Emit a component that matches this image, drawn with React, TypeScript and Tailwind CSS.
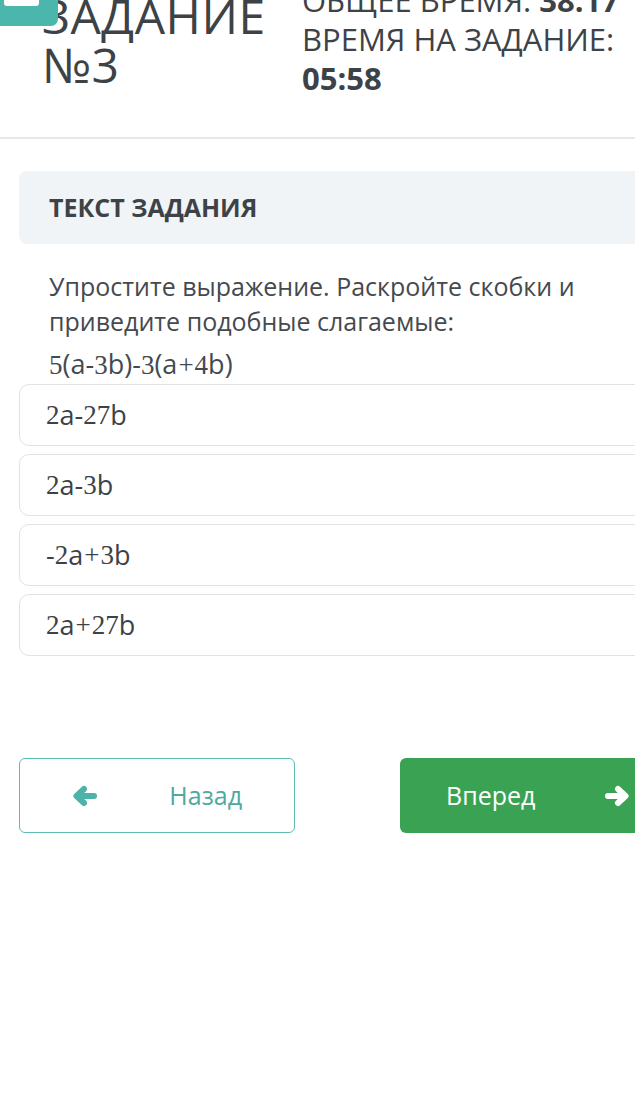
const answers = ["2a-27b", "2a-3b", "-2a+3b", "2a+27b"];

// digits and plus look like a math serif, letters and minus stay sans
function MathText({ value }: { value: string }) {
  return (
    <>
      {value.split("").map((ch, i) =>
        /[0-9]/.test(ch) ? (
          <span key={i} className="font-['Liberation_Serif',serif]">
            {ch}
          </span>
        ) : ch === "+" ? (
          <span key={i} className="mx-[1px] font-['Liberation_Serif',serif]">
            +
          </span>
        ) : (
          <span key={i}>{ch}</span>
        )
      )}
    </>
  );
}

function Arrow({ dir, className }: { dir: "left" | "right"; className?: string }) {
  return (
    <svg width="26" height="22" viewBox="0 0 26 22" className={className} style={dir === "right" ? { transform: "scaleX(-1)" } : undefined}>
      <path d="M22 11H5M12 4L4.5 11L12 18" fill="none" stroke="currentColor" strokeWidth="6" strokeLinecap="round" strokeLinejoin="round" />
    </svg>
  );
}

export default function App() {
  return (
    <div className="relative h-[1106px] w-[635px] overflow-hidden bg-white font-['Open_Sans',sans-serif] text-[#3d4247]">
      <div className="absolute left-0 top-0 h-[26px] w-[58px] rounded-br-[7px] bg-[#4bb7ac]">
        <div className="ml-[4px] h-[6px] w-[35px] rounded-b-[3px] bg-white" />
      </div>

      <div className="w-[700px]">
        <header className="flex h-[139px] items-start border-b-2 border-[#e6e8ea] pl-[42px]">
          <h1 className="-mt-[9px] w-[260px] text-[48px] font-normal leading-[49px] tracking-[0.5px]">
            ЗАДАНИЕ
            <br />
            №3
          </h1>
          <div className="-mt-[19px] text-[31px] leading-[39px]">
            <div>
              ОБЩЕЕ ВРЕМЯ: <b className="font-bold">38:17</b>
            </div>
            <div>ВРЕМЯ НА ЗАДАНИЕ:</div>
            <div className="font-bold">05:58</div>
          </div>
        </header>

        <div className="ml-[19px] mt-[32px] flex h-[73px] items-center rounded-lg bg-[#f1f4f6] px-[30px]">
          <h2 className="text-[25px] font-bold">ТЕКСТ ЗАДАНИЯ</h2>
        </div>

        <div className="ml-[49px] mt-[25px] w-[570px] text-[25px] leading-[35px] text-[#454a4f]">
          Упростите выражение. Раскройте скобки и приведите подобные слагаемые:
        </div>
        <div className="ml-[49px] mt-[7px] text-[27px] leading-[35px] text-[#454a4f]">
          <MathText value="5(a-3b)-3(a+4b)" />
        </div>

        <div className="ml-[19px] mt-[1px] flex flex-col gap-[8px]">
          {answers.map((a) => (
            <div key={a} className="flex h-[62px] items-center rounded-[10px] border border-[#dfe3e6] pl-[26px] text-[27px] text-[#3d4247]">
              <MathText value={a} />
            </div>
          ))}
        </div>

        <div className="ml-[19px] mt-[102px] flex gap-[105px]">
          <button type="button" className="flex h-[75px] w-[276px] items-center justify-between rounded-md border border-[#5cbcb2] px-[52px] text-[25px] text-[#4fa9a1]">
            <Arrow dir="left" className="text-[#4bb3a8]" />
            <span>Назад</span>
          </button>
          <button type="button" className="flex h-[75px] w-[276px] items-center justify-between rounded-md bg-[#3aa353] px-[46px] text-[25px] text-white">
            <span>Вперед</span>
            <Arrow dir="right" />
          </button>
        </div>
      </div>
    </div>
  );
}
